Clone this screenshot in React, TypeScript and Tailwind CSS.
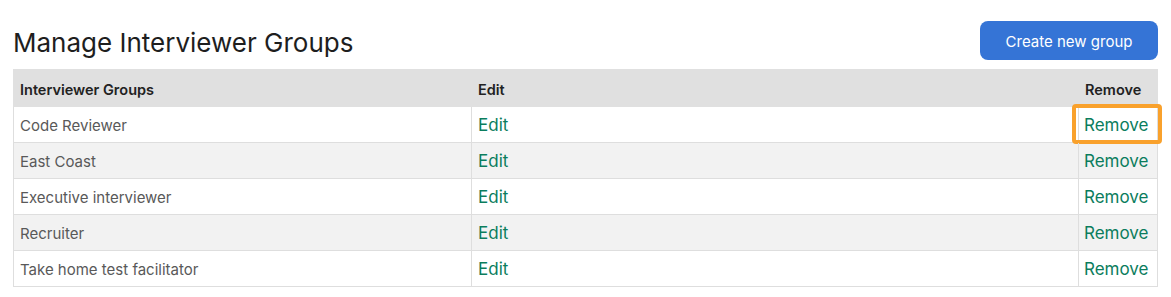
import React from "react";

const rows = [
  "Code Reviewer",
  "East Coast",
  "Executive interviewer",
  "Recruiter",
  "Take home test facilitator",
];

export default function App() {
  return (
    <div className="w-[1171px] h-[297px] bg-white px-[13px] pt-[21px] font-['Inter','Noto_Sans',sans-serif]">
      <div className="flex items-center justify-between h-[39px]">
        <h1 className="pt-[4px] text-[26px] leading-none text-[#1e1e1e] font-normal">
          Manage Interviewer Groups
        </h1>
        <button className="w-[178px] h-[39px] pt-[3px] rounded-[8px] bg-[#3574d6] text-white text-[15px]">
          Create new group
        </button>
      </div>
      <div className="mt-[9px]">
        <div className="grid grid-cols-[458px_607px_80px] h-[38px] pt-[3px] bg-[#e0e0e0] items-center text-[14.5px] font-semibold text-[#222]">
          <div className="pl-[7px]">Interviewer Groups</div>
          <div className="pl-[7px]">Edit</div>
          <div className="pl-[7px]">Remove</div>
        </div>
        {rows.map((name, i) => (
          <div
            key={name}
            className={`grid grid-cols-[457px_607px_79px] h-[36px] border-x border-b border-[#dedede] ${
              i % 2 === 1 ? "bg-[#f2f2f2]" : "bg-white"
            }`}
          >
            <div className="pl-[6px] pt-[3px] flex items-center text-[15px] text-[#595959]">{name}</div>
            <div className="pl-[6px] pt-[2px] flex items-center border-l border-[#dedede] text-[17px] text-[#0b7d5d]">
              Edit
            </div>
            <div className="relative pl-[5px] pt-[2px] flex items-center border-l border-[#dedede] text-[17px] text-[#0b7d5d]">
              Remove
              {i === 0 && (
                <div className="absolute left-[-7px] top-[-3px] w-[90px] h-[40px] border-[4px] border-[#f9a12c] rounded-[4px] pointer-events-none" />
              )}
            </div>
          </div>
        ))}
      </div>
    </div>
  );
}
